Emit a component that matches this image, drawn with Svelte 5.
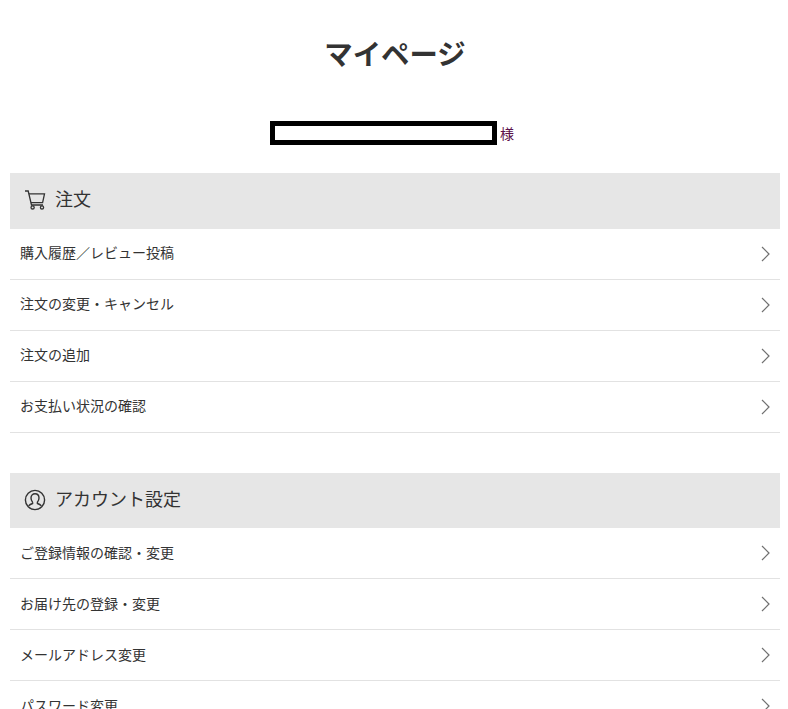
<script>
  const sections = [
    { title: '注文', icon: 'cart', items: ['購入履歴／レビュー投稿', '注文の変更・キャンセル', '注文の追加', 'お支払い状況の確認'] },
    { title: 'アカウント設定', icon: 'user', items: ['ご登録情報の確認・変更', 'お届け先の登録・変更', 'メールアドレス変更', 'パスワード変更'] }
  ];
</script>

<div class="page">
  <h1>マイページ</h1>
  <div class="name"><span class="box"></span><span class="sama">様</span></div>
  {#each sections as s}
    <section>
      <h2>
        {#if s.icon === 'cart'}
          <svg width="22" height="20" viewBox="0 0 22 20" fill="none" stroke="#333" stroke-width="1.3">
            <path d="M1 1h3.2l3.3 14H19" />
            <path d="M4.9 3.8H20.5L18.6 12.6H6.9" />
            <circle cx="8.6" cy="17.4" r="1.6" />
            <circle cx="18" cy="17.4" r="1.6" />
          </svg>
        {:else}
          <svg width="22" height="22" viewBox="0 0 22 22" fill="none" stroke="#333" stroke-width="1.4">
            <circle cx="11" cy="11" r="9.6" />
            <path d="M8.6 13.2C7.4 11.8 7 10.4 7 9c0-2.6 1.7-4.3 4-4.3s4 1.7 4 4.3c0 1.4-.4 2.8-1.6 4.2v1.3c1.6.5 3 1.2 4 2.4M8.6 13.2v1.3c-1.6.5-3 1.2-4 2.4" />
          </svg>
        {/if}
        <span>{s.title}</span>
      </h2>
      <ul>
        {#each s.items as item}
          <li>
            <span>{item}</span>
            <svg width="10" height="16" viewBox="0 0 10 16" fill="none" stroke="#707070" stroke-width="1.2"><path d="M1 1l7 7-7 7" /></svg>
          </li>
        {/each}
      </ul>
    </section>
  {/each}
</div>

<style>
  :global(body) { margin: 0; overflow: hidden; background: #fff; }
  .page {
    width: 770px;
    margin-left: 10px;
    color: #333;
    font-family: "Noto Sans CJK JP", "Noto Sans", sans-serif;
  }
  h1 {
    margin: 0;
    padding-top: 33px;
    height: 88px;
    box-sizing: border-box;
    line-height: 40px;
    font-size: 28.4px;
    font-weight: 700;
    text-align: center;
  }
  .name {
    display: flex;
    justify-content: center;
    align-items: center;
    gap: 3px;
    height: 24px;
    margin-top: 33px;
    padding-right: 6px;
  }
  .box {
    width: 227px;
    height: 24px;
    box-sizing: border-box;
    border: 5px solid #000;
    background: #fff;
  }
  .sama { font-size: 14px; color: #5c0f4a; line-height: 24px; }
  section { margin-bottom: 40px; }
  section:first-of-type { margin-top: 28px; }
  h2 {
    margin: 0;
    display: flex;
    align-items: center;
    gap: 8px;
    height: 55px;
    padding-left: 14px;
    background: #e6e6e6;
    font-size: 18px;
    font-weight: 400;
  }
  h2 span { margin-bottom: 6px; }
  h2 svg { margin: 0 1px 2px 0; }
  section:first-of-type h2 { height: 56px; }
  ul { list-style: none; margin: 0; padding: 0; }
  li {
    display: flex;
    justify-content: space-between;
    align-items: center;
    height: 51px;
    box-sizing: border-box;
    border-bottom: 1px solid #e2e2e2;
    padding: 0 9px 0 10px;
    font-size: 14px;
  }
  li span { margin-bottom: 3px; }
  section:first-of-type li span { margin-bottom: 5px; }
</style>
